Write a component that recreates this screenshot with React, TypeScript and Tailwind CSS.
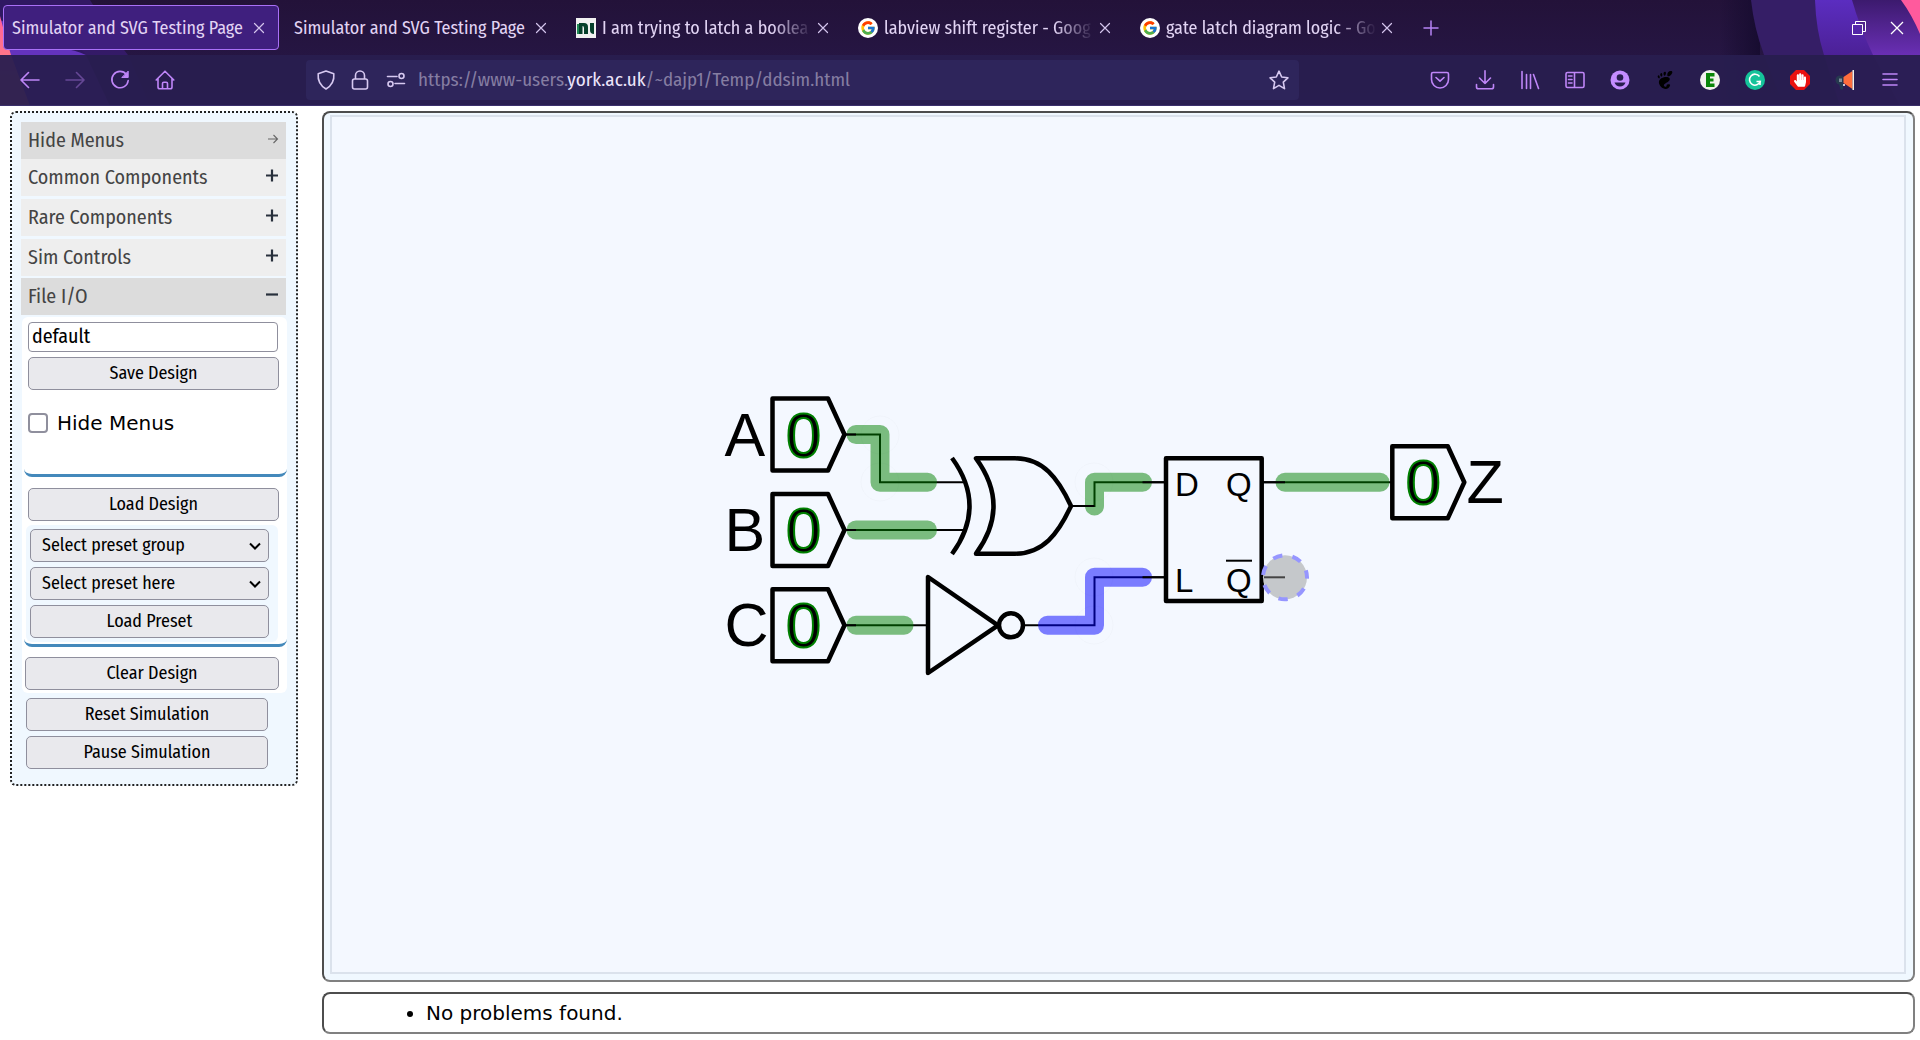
import type { ReactNode } from "react";
import { FcGoogle } from "react-icons/fc";
import { SiGnome } from "react-icons/si";
import { FaHandPaper } from "react-icons/fa";

const condensed = "font-['Fira_Sans_Condensed','Lato','Roboto',sans-serif]";

function Line({ children, className = "size-5", box = "0 0 20 20" }: { children: ReactNode; className?: string; box?: string }) {
  return (
    <svg viewBox={box} className={className} fill="none" stroke="currentColor" strokeWidth="1.6" strokeLinecap="round" strokeLinejoin="round" aria-hidden="true">
      {children}
    </svg>
  );
}

function Swooshes() {
  return (
    <>
      <svg viewBox="0 0 240 106" className="absolute left-0 top-0 h-[106px] w-60" aria-hidden="true">
        <defs>
          <linearGradient id="coral" x1="0" y1="0" x2="0" y2="1">
            <stop offset="0" stopColor="#ff5f9c" />
            <stop offset="1" stopColor="#ff9470" />
          </linearGradient>
        </defs>
        <path d="M48 0H90Q108 30 128 55L150 106H60Z" fill="#3a1c78" opacity=".7" />
        <path d="M0 0H48Q62 30 86 55L110 106H0Z" fill="#2f1862" />
        <path d="M0 20L60 48Q76 50 86 55L110 106H0Z" fill="#6433bd" />
        <path d="M0 16Q5 36 11 55L30 106H0Z" fill="url(#coral)" />
      </svg>
      <svg viewBox="0 0 220 106" className="absolute right-0 top-0 h-[106px] w-[220px]" aria-hidden="true">
        <defs>
          <linearGradient id="shade" x1="0" x2="1">
            <stop offset="0" stopColor="#170c30" stopOpacity="0" />
            <stop offset="1" stopColor="#170c30" />
          </linearGradient>
          <linearGradient id="violet" x1="0" y1="0" x2="0" y2="1">
            <stop offset="0" stopColor="#5b2dc0" />
            <stop offset=".55" stopColor="#4b2094" />
          </linearGradient>
          <linearGradient id="plum" x1="0" y1="0" x2="0" y2="1">
            <stop offset="0" stopColor="#3c1a6e" />
            <stop offset=".55" stopColor="#6c30b8" />
          </linearGradient>
        </defs>
        <path d="M20 0H60V106H20Z" fill="url(#shade)" />
        <path d="M51 0Q54 28 64 55L84 106H220V0Z" fill="#351e66" />
        <path d="M115 0Q116 30 124 55L140 106H220V0Z" fill="url(#violet)" />
        <path d="M152 0Q160 28 173 55L200 106H220V0Z" fill="url(#plum)" />
        <path d="M201 0Q212 15 220 34V0Z" fill="#ff5a9d" />
      </svg>
    </>
  );
}

function NiLogo() {
  return (
    <svg viewBox="0 0 20 20" className="size-5 shrink-0" aria-hidden="true">
      <path d="M0 0H20V20H0Z" fill="#f1f1f1" />
      <path d="M1 6H3V16H1Z" fill="#1f8a55" />
      <path d="M3 5H8Q12 5 12 9V16H8V10Q8 8 6.500 8V16H3Z" fill="#06402b" />
      <path d="M14 5H18V16Q14 16 14 12Z" fill="#06402b" />
    </svg>
  );
}

function GoogleLogo() {
  return (
    <span className="flex size-5 shrink-0 items-center justify-center rounded-full bg-white">
      <FcGoogle className="size-4" />
    </span>
  );
}

const tabs: { title: string; icon?: ReactNode; active?: boolean }[] = [
  { title: "Simulator and SVG Testing Page", active: true },
  { title: "Simulator and SVG Testing Page" },
  { title: "I am trying to latch a boolea", icon: <NiLogo /> },
  { title: "labview shift register - Goog", icon: <GoogleLogo /> },
  { title: "gate latch diagram logic - Go", icon: <GoogleLogo /> },
];

function TabStrip() {
  return (
    <div className="relative flex h-[55px] items-center pl-[3px] pr-1">
      <div className="flex min-w-0 gap-1.5">
        {tabs.map((t, i) => (
          <div
            key={i}
            className={
              "flex h-[45px] w-[276px] items-center border pl-2 pr-[11px] " +
              (t.active ? "rounded border-[#a970f7] bg-[#3f1f7e]" : "border-transparent")
            }
          >
            <button
              className={
                "flex min-w-0 flex-1 items-center gap-1.5 text-left text-[18px] leading-6 text-[#e2d4f4] " +
                (t.icon ? "[mask-image:linear-gradient(to_right,black_82%,transparent_99%)]" : "")
              }
            >
              {t.icon}
              <span className="whitespace-nowrap">{t.title}</span>
            </button>
            <button aria-label="Close tab" className="flex w-4 justify-center text-[#d3c4ec]">
              <Line className="size-3" box="0 0 12 12">
                <path d="M1.500 1.500L10.500 10.500M10.500 1.500L1.500 10.500" strokeWidth="1.2" />
              </Line>
            </button>
          </div>
        ))}
      </div>
      <button aria-label="New tab" className="ml-1.5 flex w-9 justify-center text-[#b583f5]">
        <Line className="size-4" box="0 0 16 16">
          <path d="M8 1V15M1 8H15" strokeWidth="1.5" />
        </Line>
      </button>
      <button aria-label="Restore window" className="ml-auto flex w-[38px] justify-center text-white">
        <svg viewBox="0 0 14 14" className="size-3.5" fill="none" stroke="currentColor" aria-hidden="true">
          <path d="M.5 3.500H10.500V13.500H.5ZM3.500 3V.5H13.500V10.500H11" />
        </svg>
      </button>
      <button aria-label="Close window" className="flex w-[38px] justify-center text-white">
        <svg viewBox="0 0 14 14" className="size-3.5" fill="none" stroke="currentColor" strokeWidth="1.3" aria-hidden="true">
          <path d="M1 1L13 13M13 1L1 13" />
        </svg>
      </button>
    </div>
  );
}

function NavButton({ label, children, className = "" }: { label: string; children: ReactNode; className?: string }) {
  return (
    <button aria-label={label} className={"flex h-10 w-11 items-center justify-center " + className}>
      {children}
    </button>
  );
}

function NavBar() {
  return (
    <nav className="relative flex h-[51px] items-center border-b border-[#3b2f6b] bg-[#281e4f]/95 px-2 text-[#bf86f8]">
      <div className="flex gap-px">
        <NavButton label="Back">
          <Line><path d="M1 10H19M8.500 2.500L1 10L8.500 17.500" /></Line>
        </NavButton>
        <NavButton label="Forward" className="opacity-40">
          <Line><path d="M1 10H19M11.500 2.500L19 10L11.500 17.500" /></Line>
        </NavButton>
        <NavButton label="Reload">
          <Line><path d="M16.500 4.500A8.200 8.200 0 1 0 18.200 10.500" /><path d="M18.200 1.500V7.500H12.200Z" fill="currentColor" strokeWidth="1" /></Line>
        </NavButton>
        <NavButton label="Home">
          <Line><path d="M1.200 10L10 1.200L18.800 10M3 8.500V17Q3 18.800 4.800 18.800H15.200Q17 18.800 17 17V8.500M7.500 18.500V13.500Q7.500 12.200 8.800 12.200H11.200Q12.500 12.200 12.500 13.500V18.500" /></Line>
        </NavButton>
      </div>
      <div className="mx-[119px] flex h-10 min-w-0 flex-1 items-center rounded bg-[#2e255b] px-2.5 text-[#d7c9f1]">
        <button aria-label="Tracking protection">
          <Line><path d="M10 1L17.800 3.800Q18.800 13.500 10 19Q1.200 13.500 2.200 3.800Z" /></Line>
        </button>
        <button aria-label="Site security" className="ml-3.5">
          <Line><path d="M5.500 9V5.500A4.500 4.500 0 0 1 14.500 5.500V9M4.500 9H15.500Q17.500 9 17.500 11V17Q17.500 19 15.500 19H4.500Q2.500 19 2.500 17V11Q2.500 9 4.500 9Z" /></Line>
        </button>
        <button aria-label="Permissions" className="ml-4">
          <Line><path d="M1.500 6.500H11M9 13.500H18.500" /><circle cx="15.500" cy="6" r="2.500" /><circle cx="4.500" cy="14" r="2.500" /></Line>
        </button>
        <div role="textbox" aria-label="Address" tabIndex={0} className="ml-3 min-w-0 flex-1 overflow-hidden whitespace-nowrap text-[19px] leading-6 text-[#857da2]">
          https://www-users.<span className="text-[#ece4fa]">york.ac.uk</span>/~dajp1/Temp/ddsim.html
        </div>
        <button aria-label="Bookmark this page">
          <Line><path d="M10 1.200L12.700 7L18.900 7.800L14.300 12.100L15.500 18.600L10 15.400L4.500 18.600L5.700 12.100L1.100 7.800L7.300 7Z" /></Line>
        </button>
      </div>
      <div className="flex gap-px">
        <NavButton label="Save to Pocket">
          <Line><path d="M3 2.500H17Q18.500 2.500 18.500 4V9.500A8.500 8.500 0 0 1 1.500 9.500V4Q1.500 2.500 3 2.500ZM6 7.500L10 11.200L14 7.500" /></Line>
        </NavButton>
        <NavButton label="Downloads">
          <Line><path d="M10 .8V13.500M4.500 8L10 13.500L15.500 8M1.500 14.500V17Q1.500 18.800 3.500 18.800H16.500Q18.500 18.800 18.500 17V14.500" /></Line>
        </NavButton>
        <NavButton label="Library">
          <Line><path d="M2 1.500V18.500M6.500 4.500V18.500M10.500 4.500V18.500M13.500 4.500L18.500 18.500" /></Line>
        </NavButton>
        <NavButton label="Sidebars">
          <Line><path d="M2.500 2.500H17.500Q19 2.500 19 4V16Q19 17.500 17.500 17.500H2.500Q1 17.500 1 16V4Q1 2.500 2.500 2.500ZM9.500 2.500V17.500M3.500 6H7M3.500 9.500H7M3.500 13H7" /></Line>
        </NavButton>
        <NavButton label="Account">
          <svg viewBox="0 0 20 20" className="size-5" fill="none" aria-hidden="true">
            <circle cx="10" cy="10" r="9.500" fill="#c48dff" />
            <circle cx="10" cy="7.500" r="3.300" fill="#281e4f" />
            <path d="M4.500 12.500H15.500Q14 16.500 10 16.500Q6 16.500 4.500 12.500Z" fill="#281e4f" />
          </svg>
        </NavButton>
        <NavButton label="GNOME Shell integration">
          <SiGnome className="size-[18px] text-black" />
        </NavButton>
        <NavButton label="Extension E">
          <svg viewBox="0 0 20 20" className="size-5" aria-hidden="true">
            <circle cx="10" cy="10" r="10" fill="#f2f2ee" />
            <path d="M6 3H14.500V6.500H10V8.500H13.500V11.500H10V13.500H14.500V17H6Z" fill="#0a860a" />
          </svg>
        </NavButton>
        <NavButton label="Grammarly">
          <svg viewBox="0 0 20 20" className="size-5" fill="none" stroke="white" strokeWidth="1.6" aria-hidden="true">
            <circle cx="10" cy="10" r="10" fill="#15c39a" stroke="none" />
            <path d="M14.500 6.500A5.500 5.500 0 1 0 15.200 11.500H11.500" />
            <path d="M15 10.800V15" />
          </svg>
        </NavButton>
        <NavButton label="AdBlock">
          <span className="flex size-5 items-center justify-center bg-[#ea1010] [clip-path:polygon(30%_0,70%_0,100%_30%,100%_70%,70%_100%,30%_100%,0_70%,0_30%)]">
            <FaHandPaper className="h-3.5 w-3 text-white" />
          </span>
        </NavButton>
        <NavButton label="Announcements">
          <svg viewBox="0 0 20 20" className="size-5" aria-hidden="true">
            <path d="M3 10H8V19.500H5.500Z" fill="#203b54" />
            <circle cx="5" cy="10" r="4.500" fill="#26394f" />
            <path d="M4 8.500H7V12H4Z" fill="#7f8c9a" />
            <path d="M8.500 7L17.500 1V19L8.500 13Z" fill="#ff6d3d" />
            <path d="M17.500 0H19V20H17.500Z" fill="#f3efe9" />
            <circle cx="9" cy="15" r="1" fill="white" />
          </svg>
        </NavButton>
        <NavButton label="Menu">
          <Line className="size-4" box="0 0 16 16"><path d="M1 2H15M1 7.500H15M1 13H15" /></Line>
        </NavButton>
      </div>
    </nav>
  );
}

function Section({ label, sign, dark }: { label: string; sign: "arrow" | "plus" | "minus"; dark?: boolean }) {
  return (
    <button
      className={
        "flex h-[37px] w-full items-center justify-between px-[7px] pb-0.5 text-left text-[20px] leading-6 text-[#444] " +
        (dark ? "bg-[#dcdcdc]" : "bg-[#eeeeee]")
      }
    >
      {label}
      <svg viewBox="0 0 14 18" className="h-[18px] w-3.5 text-[#28303c]" fill="none" stroke="currentColor" strokeWidth="2.2" aria-hidden="true">
        {sign === "arrow" && <path d="M3 8H12M8.500 4L12.500 8L8.500 12" stroke="#666" strokeWidth="1.1" />}
        {sign === "plus" && <path d="M1 7.500H13M7 1.500V13.500" />}
        {sign === "minus" && <path d="M1 7.500H13" />}
      </svg>
    </button>
  );
}

const control = "h-[33px] rounded-[5px] border border-[#8f8f9d] bg-[#e9e9ed] pb-0.5 text-[18px] leading-6 text-black";

function PresetSelect({ label }: { label: string }) {
  return (
    <div className="relative">
      <select aria-label={label} className={control + " w-full appearance-none pl-[11px] pr-8"}>
        <option>{label}</option>
      </select>
      <svg viewBox="0 0 12 8" className="pointer-events-none absolute right-2 top-[13px] h-2 w-3" fill="none" stroke="black" strokeWidth="2" aria-hidden="true">
        <path d="M1 1.500L6 6.500L11 1.500" />
      </svg>
    </div>
  );
}

function Sidebar() {
  return (
    <aside className={"w-[288px] shrink-0 self-start rounded-md border-2 border-dotted border-[#222] bg-[#f0f8ff] pb-[15px] pl-[9px] pr-2.5 pt-[9px] " + condensed}>
      <Section label="Hide Menus" sign="arrow" dark />
      <div className="flex flex-col gap-[3px]">
        <Section label="Common Components" sign="plus" />
        <Section label="Rare Components" sign="plus" />
        <Section label="Sim Controls" sign="plus" />
      </div>
      <div className="mt-0.5">
        <Section label="File I/O" sign="minus" dark />
      </div>
      <div className="-mr-px ml-px mt-0.5 rounded-md bg-white pb-[3px] pl-0.5 pt-[5px]">
        <div className="flex h-[155px] flex-col rounded-b-lg border-b-[3px] border-[#4489bb] pl-1 pr-2">
          <input aria-label="Design name" defaultValue="default" className="mr-px h-[30px] rounded-sm border border-[#8f8f9d] bg-white px-[3px] pb-0.5 text-[20px] leading-6 text-black" />
          <button className={control + " mt-[5px]"}>Save Design</button>
          <label className="mt-[19px] flex items-center gap-[9px] font-['DejaVu_Sans',sans-serif] text-[20px] leading-7 text-black">
            <input type="checkbox" className="size-5 appearance-none rounded-sm border-2 border-[#8f8f9d] bg-white checked:bg-[#0060df]" />
            Hide Menus
          </label>
        </div>
        <div className="flex flex-col rounded-b-lg border-b-[3px] border-[#4489bb] pb-0.5 pt-[11px]">
          <button className={control + " ml-1 mr-2"}>Load Design</button>
          <div className="ml-0.5 mr-[9px] mt-1 flex flex-col gap-[5px] rounded-md bg-[#f0f8ff] py-1 pl-1 pr-[9px]">
            <PresetSelect label="Select preset group" />
            <PresetSelect label="Select preset here" />
            <button className={control}>Load Preset</button>
          </div>
        </div>
        <div className="ml-px mr-2 mt-2.5 flex flex-col">
          <button className={control}>Clear Design</button>
        </div>
      </div>
      <div className="ml-[5px] mr-[18px] mt-[5px] flex flex-col gap-[5px]">
        <button className={control}>Reset Simulation</button>
        <button className={control}>Pause Simulation</button>
      </div>
    </aside>
  );
}

function Port({ x, y, name, nameX }: { x: number; y: number; name: string; nameX: number }) {
  return (
    <g>
      <path d={`M${x} ${y - 36}h55.500l16.500 36l-16.500 36h-55.500Z`} fill="none" stroke="black" strokeWidth="4.500" strokeLinejoin="round" />
      <text x={x + 31} y={y + 22} fontSize="63" textAnchor="middle" fill="black" stroke="#008000" strokeWidth="2">0</text>
      <text x={nameX} y={y + 21}>{name}</text>
    </g>
  );
}

function Circuit() {
  return (
    <svg viewBox="332 117 1572 855" className="h-full w-full" fontFamily="'Liberation Sans', Arial, sans-serif" fontSize="61" fill="black" role="img" aria-label="Logic circuit">
      <g fill="none" stroke="#000" strokeOpacity=".02">
        <circle cx="880" cy="435" r="19" />
        <circle cx="880" cy="482" r="19" />
        <circle cx="1094" cy="482" r="19" />
        <circle cx="1094" cy="577" r="19" />
        <circle cx="1094" cy="625" r="19" />
      </g>
      <g fill="none" stroke="black" strokeWidth="2">
        <path d="M844 434.500H880V482.300H966" />
        <path d="M844 530H966" />
        <path d="M844 625.300H928" />
        <path d="M1071 506H1094.500V482.300H1166" />
        <path d="M1023 625.300H1094.500V577.300H1166" />
        <path d="M1262 482.300H1392" />
      </g>
      <g fill="none" strokeWidth="19" strokeLinecap="round" strokeLinejoin="round" strokeOpacity=".5" stroke="#008000">
        <path d="M856 434.500H880V482.300H927.500" />
        <path d="M856 530H927.500" />
        <path d="M856 625.300H904" />
        <path d="M1094.500 506V482.300H1142.500" />
        <path d="M1285 482.300H1380" />
        <path d="M1047.500 625.300H1094.500V577.300H1142.500" stroke="#0000ff" />
      </g>
      <g fill="none" stroke="black" strokeWidth="2">
        <path d="M844 434.500H856M844 530H856M844 625.300H856M1071 506H1094.500M1142.500 482.300H1166M1142.500 577.300H1166M1262 482.300H1285" />
      </g>
      <g fill="none" stroke="black" strokeWidth="4.500" strokeLinejoin="round" strokeLinecap="butt">
        <path d="M952 458Q987 506 952 554" />
        <path d="M976 458.300H1015C1043 458.300 1058 478 1071 506C1058 534 1043 553.700 1015 553.700H976Q1011 506 976 458.300Z" />
        <path d="M928 577V673L998 625.300Z" />
        <circle cx="1011" cy="625.300" r="12" />
        <path d="M1166 458.300H1261.700V601H1166Z" />
      </g>
      <g fontSize="33">
        <text x="1175" y="496">D</text>
        <text x="1226" y="496">Q</text>
        <text x="1175" y="592">L</text>
        <text x="1226" y="592">Q</text>
      </g>
      <path d="M1226 560.700H1252" stroke="black" strokeWidth="2" />
      <circle cx="1285" cy="577.300" r="22" fill="#c5c8cb" />
      <path d="M1264 577.300H1285" stroke="#444" strokeWidth="2" />
      <circle cx="1285" cy="577.300" r="22" fill="none" stroke="#9696ff" strokeWidth="4" strokeDasharray="9.500 10.250" strokeDashoffset="8" />
      <Port x={772.5} y={434.5} name="A" nameX={724.5} />
      <Port x={772.5} y={530} name="B" nameX={724.5} />
      <Port x={772.5} y={625.3} name="C" nameX={724.5} />
      <Port x={1392.3} y={482.3} name="Z" nameX={1466.5} />
    </svg>
  );
}

export default function App() {
  return (
    <div className="flex h-screen min-h-[800px] flex-col bg-white">
      <header className={"relative shrink-0 overflow-hidden bg-linear-to-b from-[#231239] to-[#28194c] " + condensed}>
        <Swooshes />
        <TabStrip />
        <NavBar />
      </header>
      <div className="flex min-h-0 flex-1 gap-6 pb-1.5 pl-2.5 pr-[5px] pt-[5px]">
        <Sidebar />
        <div className="flex min-w-0 flex-1 flex-col gap-2.5">
          <main className="min-h-0 flex-1 rounded-lg border-2 border-b-[#808080] border-l-[#4d4d4d] border-r-[#808080] border-t-[#4d4d4d] bg-[#f0f8ff] pb-1.5 pl-1.5 pr-[7px] pt-0.5">
            <div className="h-full border-2 border-[#dbe2ec] bg-[#f4f8ff]">
              <Circuit />
            </div>
          </main>
          <section className="flex h-[42px] shrink-0 items-center rounded-lg border-2 border-b-[#808080] border-l-[#4d4d4d] border-r-[#808080] border-t-[#4d4d4d] pl-[102px]">
            <ul className="list-disc font-['DejaVu_Sans',sans-serif] text-[20px] leading-6 text-black">
              <li>No problems found.</li>
            </ul>
          </section>
        </div>
      </div>
    </div>
  );
}
